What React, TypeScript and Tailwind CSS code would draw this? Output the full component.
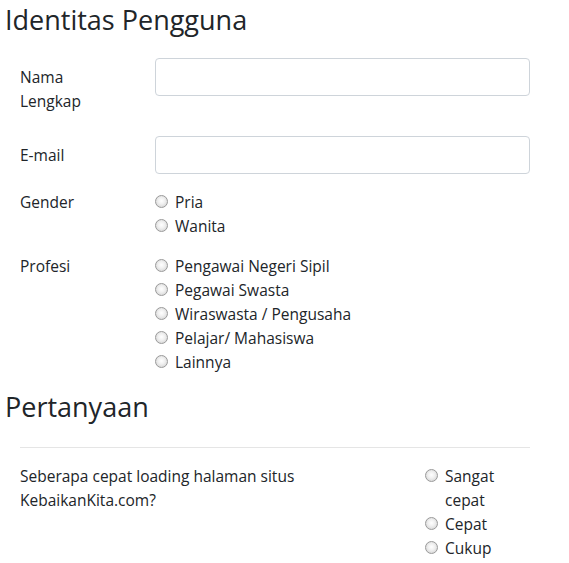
const genders = ['Pria', 'Wanita'];
const profesi = [
  'Pengawai Negeri Sipil',
  'Pegawai Swasta',
  'Wiraswasta / Pengusaha',
  'Pelajar/ Mahasiswa',
  'Lainnya',
];
const kecepatan = ['Sangat cepat', 'Cepat', 'Cukup'];

const Radio = () => (
  <span className="absolute left-0 top-[5px] h-[13px] w-[13px] rounded-full border border-[#9a9a9a] bg-[radial-gradient(circle_at_50%_45%,#ffffff_0%,#f0f0f0_40%,#cbcbcb_100%)]" />
);

const RadioItem = ({ label }: { label: string }) => (
  <label className="relative block pl-[20px]">
    <Radio />
    {label}
  </label>
);

export default function App() {
  return (
    <div className="min-h-[563px] bg-white px-[5px] pt-[3px] text-[15.5px] leading-[24px] text-[#212529] font-['Open_Sans',sans-serif]">
      <h3 className="mb-[21px] text-[27px] leading-[33.6px]">Identitas Pengguna</h3>

      <div className="w-[525px] pl-[15px]">
        <div className="mb-[16px] flex">
          <div className="w-[135px] py-[7px]">
            Nama
            <br />
            Lengkap
          </div>
          <div className="h-[38px] flex-1 rounded-[4px] border border-[#ced4da] bg-white" />
        </div>

        <div className="mb-[16px] flex">
          <div className="w-[135px] py-[7px]">E-mail</div>
          <div className="h-[38px] flex-1 rounded-[4px] border border-[#ced4da] bg-white" />
        </div>

        <div className="mb-[16px] flex">
          <div className="w-[135px]">Gender</div>
          <div className="flex-1">
            {genders.map((g) => (
              <RadioItem key={g} label={g} />
            ))}
          </div>
        </div>

        <div className="mb-[16px] flex">
          <div className="w-[135px]">Profesi</div>
          <div className="flex-1">
            {profesi.map((p) => (
              <RadioItem key={p} label={p} />
            ))}
          </div>
        </div>
      </div>

      <h3 className="text-[27px] leading-[33.6px]">Pertanyaan</h3>

      <div className="w-[525px] pl-[15px]">
        <hr className="mt-[24px] mb-[16px] border-t border-[rgba(0,0,0,0.1)]" />
        <div className="flex">
          <div className="w-[405px]">
            Seberapa cepat loading halaman situs
            <br />
            KebaikanKita.com?
          </div>
          <div className="w-[105px]">
            {kecepatan.map((k) => (
              <RadioItem key={k} label={k} />
            ))}
          </div>
        </div>
      </div>
    </div>
  );
}
